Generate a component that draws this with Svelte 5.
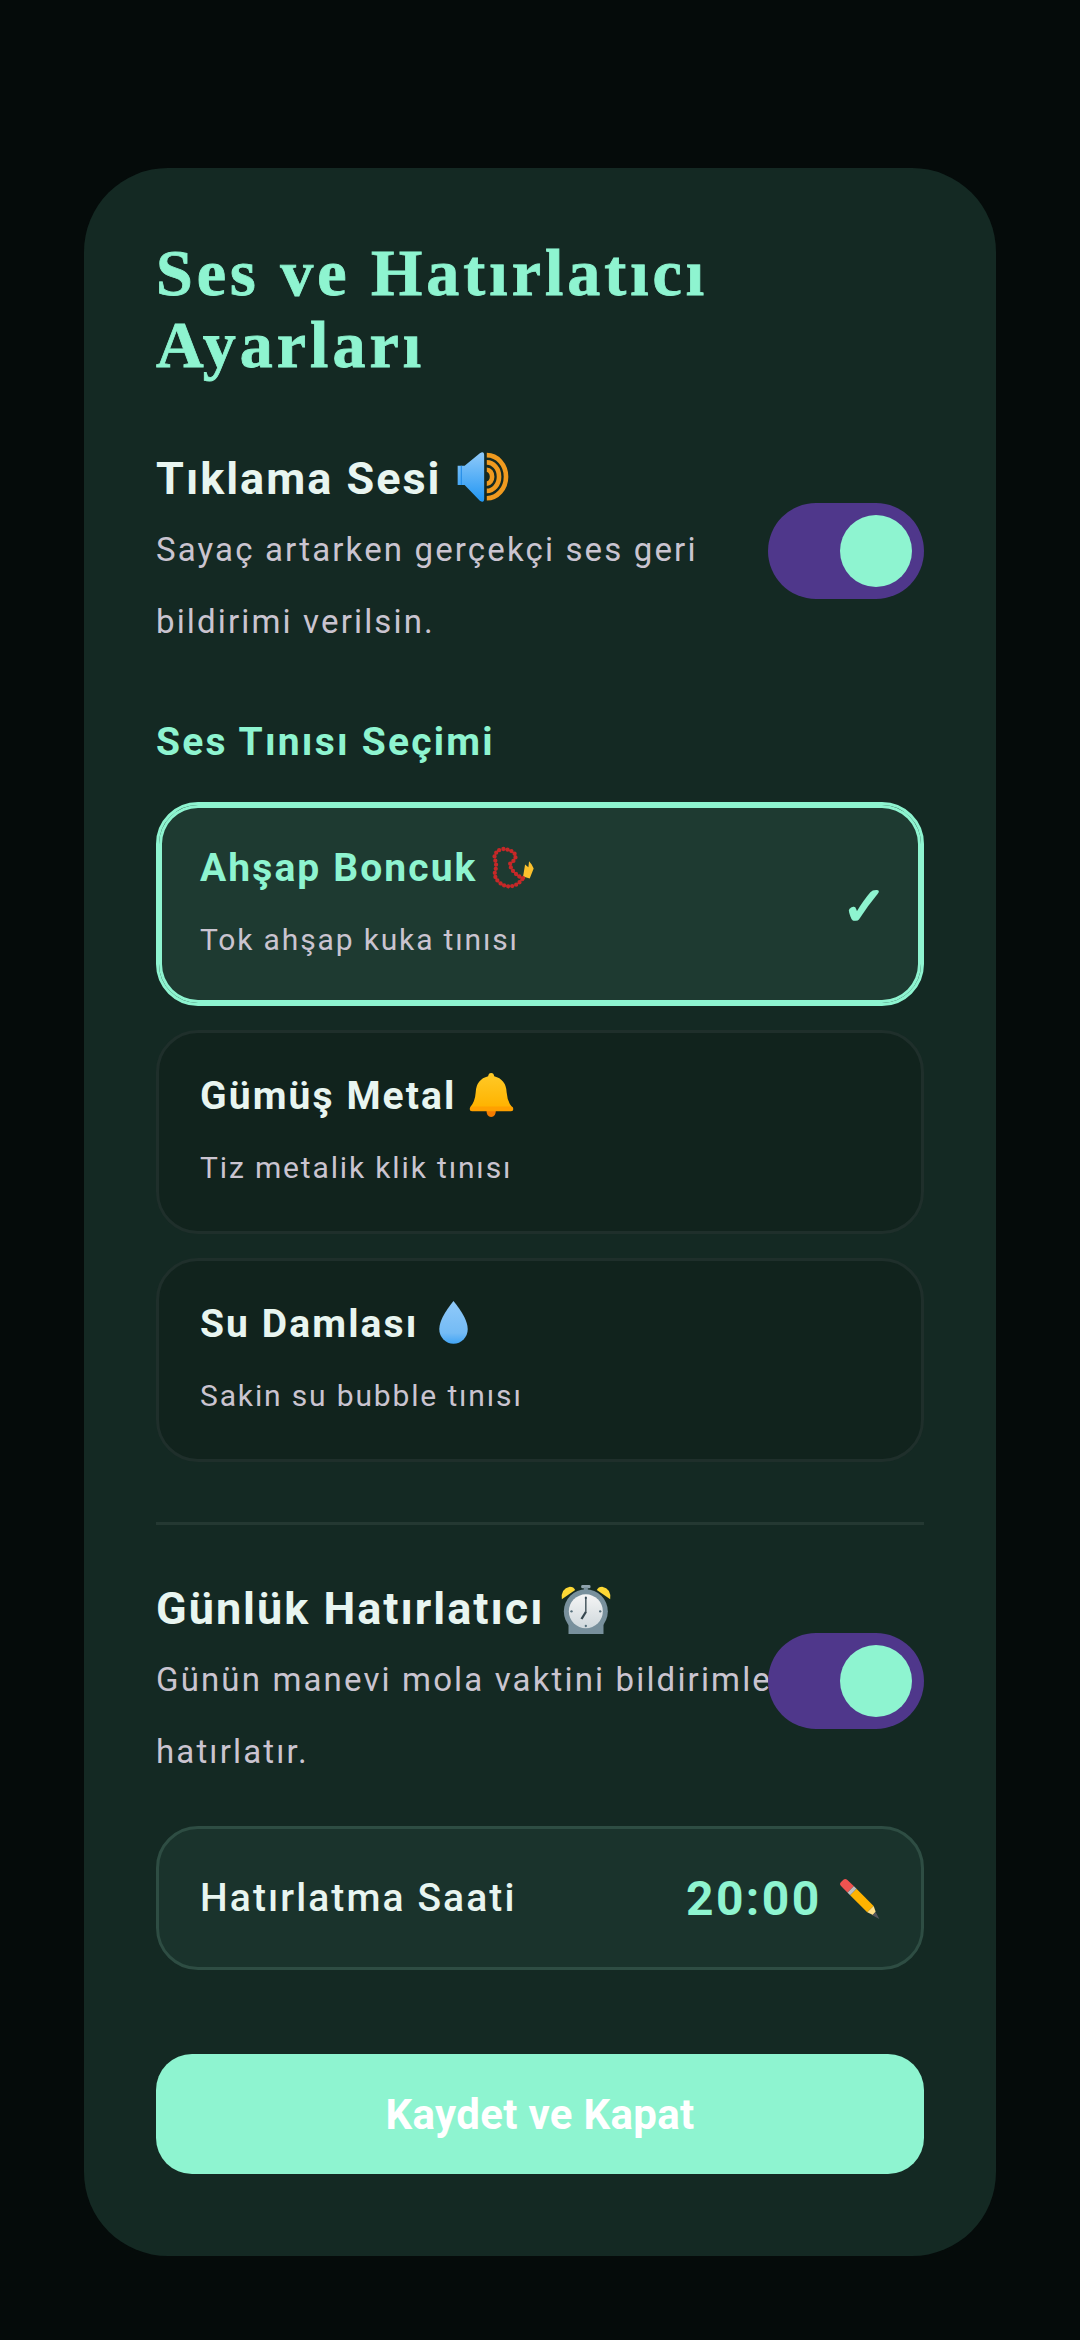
<script lang="ts">
  let clickSound = $state(true);
  let reminder = $state(true);
  let selected = $state('wood');

  const tones = [
    { id: 'wood', name: 'Ahşap Boncuk', hint: 'Tok ahşap kuka tınısı' },
    { id: 'metal', name: 'Gümüş Metal', hint: 'Tiz metalik klik tınısı' },
    { id: 'water', name: 'Su Damlası', hint: 'Sakin su bubble tınısı' }
  ];
</script>

{#snippet toggle(on, flip, label)}
  <button class="toggle" class:on aria-label={label} onclick={flip}><span class="knob"></span></button>
{/snippet}

<main class="card">
  <h1>Ses ve Hatırlatıcı Ayarları</h1>

  <section class="row">
    <div class="row-text">
      <h2>Tıklama Sesi
        <svg class="icon speaker" viewBox="50 8 160 156" aria-hidden="true">
          <defs>
            <linearGradient id="blue" x1="0" y1="0" x2="0" y2="1">
              <stop offset="0" stop-color="#90caf9" />
              <stop offset="1" stop-color="#2196f3" />
            </linearGradient>
          </defs>
          <path d="M55 52H76L122 14Q135 6 135 20V152Q135 166 122 158L76 110H55Z" fill="url(#blue)" />
          <path d="M66 52V110" stroke="#1e88e5" stroke-width="3" fill="none" />
          <g fill="none" stroke="#f09a1f" stroke-width="14">
            <path d="M143 20A58 65 0 0 1 143 150" />
            <path d="M143 42A37 43 0 0 1 143 128" />
            <path d="M143 64A16 21 0 0 1 143 106" />
          </g>
        </svg>
      </h2>
      <p>Sayaç artarken gerçekçi ses geri bildirimi verilsin.</p>
    </div>
    {@render toggle(clickSound, () => (clickSound = !clickSound), 'Tıklama Sesi')}
  </section>

  <h3 class="section-label">Ses Tınısı Seçimi</h3>

  <div class="options">
    {#each tones as tone}
      <button class="option" class:active={selected === tone.id} onclick={() => (selected = tone.id)}>
        <span class="option-text">
          <span class="option-name">{tone.name}
            {#if tone.id === 'wood'}
              <svg class="icon beads" viewBox="150 48 136 136" aria-hidden="true">
                <path d="M256 104L266 112L268 94L276 104L282 116L270 146L250 140Z" fill="#fbc02d" />
                <path d="M250 145Q238 142 228 132Q212 118 210 102Q226 92 228 78Q222 60 190 57Q166 60 163 84Q172 104 166 122Q160 142 178 158Q198 176 225 167Q240 160 250 145" fill="none" stroke="#c62828" stroke-width="13" stroke-linecap="round" stroke-dasharray="0 12.5" />
              </svg>
            {:else if tone.id === 'metal'}
              <svg class="icon bell" viewBox="148 12 134 134" aria-hidden="true">
                <defs>
                  <linearGradient id="gold" x1="0" y1="0" x2="0" y2="1">
                    <stop offset="0" stop-color="#ffca28" />
                    <stop offset="1" stop-color="#ffb300" />
                  </linearGradient>
                </defs>
                <path d="M200 126H228Q228 146 214 146Q200 146 200 126Z" fill="#f57c00" />
                <path d="M205 25Q206 15 214 15Q222 15 223 25Q258 34 260 72Q262 100 276 116H152Q166 100 168 72Q170 34 205 25Z" fill="url(#gold)" />
                <rect x="150" y="115" width="130" height="14" rx="7" fill="#ffa000" />
              </svg>
            {:else}
              <svg class="icon drop" viewBox="54 22 92 136" aria-hidden="true">
                <defs>
                  <linearGradient id="water" x1="0" y1="0" x2="0" y2="1">
                    <stop offset="0" stop-color="#90caf9" />
                    <stop offset="0.75" stop-color="#74bbf5" />
                    <stop offset="1" stop-color="#42a5f5" />
                  </linearGradient>
                </defs>
                <path d="M100 25Q143 78 143 110A43 44 0 0 1 57 110Q57 78 100 25Z" fill="url(#water)" />
              </svg>
            {/if}
          </span>
          <span class="option-hint">{tone.hint}</span>
        </span>
        {#if selected === tone.id}
          <span class="check">✓</span>
        {/if}
      </button>
    {/each}
  </div>

  <hr />

  <section class="row">
    <div class="row-text">
      <h2>Günlük Hatırlatıcı
        <svg class="icon alarm" viewBox="55 42 155 165" aria-hidden="true">
          <defs>
            <linearGradient id="face" x1="0" y1="0" x2="0" y2="1">
              <stop offset="0" stop-color="#f5f5f5" />
              <stop offset="1" stop-color="#cfd8dc" />
            </linearGradient>
          </defs>
          <path d="M60 88Q56 56 84 50Q96 50 100 60Z" fill="#fdd835" />
          <path d="M205 88Q209 56 181 50Q169 50 165 60Z" fill="#fdd835" />
          <rect x="118" y="45" width="28" height="10" rx="4" fill="#90a4ae" />
          <rect x="126" y="52" width="12" height="16" fill="#78909c" />
          <path d="M80 160H185V192H80Z" fill="#78909c" />
          <circle cx="132" cy="124" r="66" fill="#78909c" />
          <circle cx="132" cy="124" r="51" fill="url(#face)" />
          <g fill="#546e7a">
            <circle cx="132" cy="84" r="3.5" /><circle cx="132" cy="168" r="3.5" />
            <circle cx="89" cy="124" r="3.5" /><circle cx="175" cy="124" r="3.5" />
          </g>
          <path d="M132 128V80" stroke="#37474f" stroke-width="4" fill="none" />
          <path d="M132 126L119 147" stroke="#37474f" stroke-width="7" fill="none" />
        </svg>
      </h2>
      <p>Günün manevi mola vaktini bildirimle hatırlatır.</p>
    </div>
    {@render toggle(reminder, () => (reminder = !reminder), 'Günlük Hatırlatıcı')}
  </section>

  <div class="time-row">
    <span class="time-label">Hatırlatma Saati</span>
    <span class="time-value">20:00
      <svg class="icon pencil" viewBox="48 50 125 125" aria-hidden="true">
        <path d="M84 101L103 82L154 133L135 152Z" fill="#ffb300" />
        <path d="M135 152L154 133L160 150L152 160Z" fill="#ffe08a" />
        <path d="M150 161L160 151L171 172Z" fill="#55555c" />
        <path d="M76 93L95 74L103 82L84 101Z" fill="#bdbdbd" />
        <path d="M57 74Q51 68 57 62L64 55Q70 50 76 56L95 74L76 93Z" fill="#ef5350" />
      </svg>
    </span>
  </div>

  <button class="save">Kaydet ve Kapat</button>
</main>

<style>
  :global(body) {
    margin: 0;
    background: #050b0a;
    font-family: Roboto, "Noto Sans", sans-serif;
  }

  .card {
    box-sizing: border-box;
    margin: 168px 84px 84px;
    padding: 72px;
    height: 2088px;
    border-radius: 84px;
    background: #142923;
  }

  h1 {
    margin: -3px 0 63px;
    font-family: "Liberation Serif", serif;
    font-size: 66px;
    font-weight: 700;
    line-height: 72px;
    letter-spacing: 4px;
    color: #8ef4d0;
    -webkit-text-stroke: 0.8px #8ef4d0;
  }

  .row {
    display: flex;
    align-items: center;
    justify-content: space-between;
  }

  .row-text {
    flex: 1;
    min-width: 0;
  }

  h2 {
    margin: 0;
    font-size: 45px;
    font-weight: 700;
    line-height: 70px;
    letter-spacing: 2px;
    color: #e8f5f0;
  }

  p {
    margin: 0 -4px 0 0;
    font-size: 33px;
    line-height: 72px;
    letter-spacing: 2.15px;
    color: #cac4d0;
  }

  .toggle {
    flex: none;
    display: flex;
    justify-content: flex-start;
    align-items: center;
    box-sizing: border-box;
    width: 156px;
    height: 96px;
    padding: 12px;
    border: 0;
    border-radius: 48px;
    background: #4f378b;
  }

  .toggle.on {
    justify-content: flex-end;
  }

  .knob {
    width: 72px;
    height: 72px;
    border-radius: 50%;
    background: #8ef4d0;
  }

  .section-label {
    margin: 54px 0 0;
    font-size: 39px;
    font-weight: 700;
    line-height: 60px;
    letter-spacing: 2.2px;
    color: #8ef4d0;
  }

  .options {
    display: flex;
    flex-direction: column;
    gap: 24px;
    margin-top: 30px;
  }

  .option {
    display: flex;
    align-items: center;
    justify-content: space-between;
    box-sizing: border-box;
    width: 100%;
    height: 204px;
    padding: 0 41px;
    border: 3px solid #1f2f2b;
    border-radius: 42px;
    background: #11231d;
    font-family: inherit;
    text-align: left;
  }

  .option.active {
    border-color: #8ef4d0;
    box-shadow: inset 0 0 0 3px #8ef4d0;
    background: #1e3a31;
  }

  .option-text {
    display: flex;
    flex-direction: column;
  }

  .option-name {
    font-size: 39px;
    font-weight: 700;
    line-height: 60px;
    letter-spacing: 2.1px;
    color: #e8f5f0;
  }

  .active .option-name {
    color: #8ef4d0;
  }

  .option-hint {
    margin-top: 12px;
    font-size: 30px;
    line-height: 60px;
    letter-spacing: 1.85px;
    color: #cac4d0;
  }

  .check {
    margin-right: -7px;
    padding-top: 6px;
    font-family: "DejaVu Sans", sans-serif;
    font-size: 54px;
    font-weight: 700;
    line-height: 1;
    color: #8ef4d0;
    -webkit-text-stroke: 2px #8ef4d0;
  }

  .icon {
    display: inline-block;
  }

  .speaker {
    width: 53px;
    height: 52px;
    margin-left: 1px;
    vertical-align: -9px;
  }

  .beads {
    width: 45px;
    height: 45px;
    margin-left: 1px;
    vertical-align: -10px;
  }

  .bell {
    width: 45px;
    height: 45px;
    margin-left: 1px;
    vertical-align: -8px;
  }

  .drop {
    width: 31px;
    height: 45px;
    margin-left: 8px;
    vertical-align: -8px;
  }

  .alarm {
    width: 52px;
    height: 55px;
    margin-left: 2px;
    vertical-align: -15px;
  }

  hr {
    height: 3px;
    margin: 60px 0 49px;
    border: 0;
    background: #243832;
  }

  .time-row {
    display: flex;
    align-items: center;
    justify-content: space-between;
    box-sizing: border-box;
    height: 144px;
    margin-top: 38px;
    padding: 0 41px;
    border: 3px solid #2e4d43;
    border-radius: 42px;
    background: #1a332c;
  }

  .time-label {
    font-size: 39px;
    font-weight: 500;
    letter-spacing: 2.1px;
    color: #e8f5f0;
  }

  .time-value {
    font-size: 48px;
    font-weight: 700;
    letter-spacing: 2.4px;
    color: #8ef4d0;
  }

  .pencil {
    width: 42px;
    height: 42px;
    margin-left: 2px;
    vertical-align: -5px;
  }

  .save {
    display: block;
    width: 100%;
    height: 120px;
    margin-top: 84px;
    border: 0;
    border-radius: 36px;
    background: #8ef4d0;
    font-family: inherit;
    font-size: 42px;
    font-weight: 700;
    letter-spacing: 0.3px;
    color: #fff;
  }
</style>
